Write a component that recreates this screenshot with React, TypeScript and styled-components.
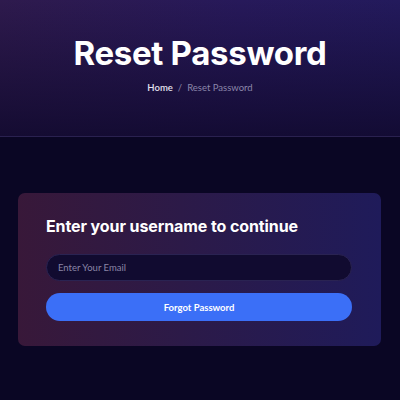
import React from "react";
import styled, { createGlobalStyle } from "styled-components";

const Global = createGlobalStyle`
  html, body { margin: 0; padding: 0; background: #0a0624; }
  body { font-family: Inter, "Noto Sans", sans-serif; }
  * { box-sizing: border-box; }
`;

const Page = styled.div`
  width: 400px;
  height: 400px;
  background: #0a0624;
  overflow: hidden;
`;

const Hero = styled.header`
  height: 137px;
  padding-top: 33px;
  border-bottom: 1px solid #2a2150;
  background:
    linear-gradient(180deg, rgba(16, 9, 45, 0) 0%, rgba(16, 9, 45, 0.85) 100%),
    linear-gradient(90deg, #2e1a4d 0%, #27195a 60%, #231a5c 100%);
  display: flex;
  flex-direction: column;
  align-items: center;
`;

const Title = styled.h1`
  margin: 0;
  font-family: Inter, sans-serif;
  font-weight: 700;
  font-size: 33px;
  line-height: 41px;
  color: #ffffff;
  letter-spacing: -0.3px;
`;

const Crumbs = styled.nav`
  margin-top: 8px;
  display: flex;
  gap: 5px;
  font-family: Lato, "Noto Sans", sans-serif;
  font-size: 9.5px;
  line-height: 12px;
`;

const Crumb = styled.span<{ $active?: boolean }>`
  color: ${(p) => (p.$active ? "#8b86aa" : "#e4e2ef")};
  font-weight: ${(p) => (p.$active ? 400 : 600)};
`;

const Sep = styled.span`
  color: #8b86aa;
`;

const Main = styled.main`
  padding: 56px 19px 0 18px;
`;

const Card = styled.section`
  border-radius: 7px;
  padding: 22px 29px 25px 28px;
  background: linear-gradient(90deg, #381839 0%, #2c1a48 45%, #1f1b5a 100%);
  display: flex;
  flex-direction: column;
`;

const Heading = styled.h2`
  margin: 0 0 16px;
  font-family: Inter, sans-serif;
  font-weight: 700;
  font-size: 16px;
  line-height: 23px;
  letter-spacing: -0.1px;
  color: #ffffff;
`;

const Input = styled.input`
  height: 27px;
  border-radius: 14px;
  border: 1px solid #2a2352;
  background: #110b30;
  padding: 0 11px;
  font-family: Lato, "Noto Sans", sans-serif;
  font-size: 9.5px;
  color: #ffffff;
  outline: none;
  &::placeholder { color: #8a85a6; }
`;

const Button = styled.button`
  margin-top: 12px;
  height: 28px;
  border: none;
  border-radius: 14px;
  background: #3b6ff7;
  color: #ffffff;
  font-family: Lato, "Noto Sans", sans-serif;
  font-weight: 700;
  font-size: 9.5px;
  cursor: pointer;
`;

export default function App() {
  return (
    <Page>
      <Global />
      <Hero>
        <Title>Reset Password</Title>
        <Crumbs>
          <Crumb>Home</Crumb>
          <Sep>/</Sep>
          <Crumb $active>Reset Password</Crumb>
        </Crumbs>
      </Hero>
      <Main>
        <Card>
          <Heading>Enter your username to continue</Heading>
          <Input placeholder="Enter Your Email" />
          <Button>Forgot Password</Button>
        </Card>
      </Main>
    </Page>
  );
}
